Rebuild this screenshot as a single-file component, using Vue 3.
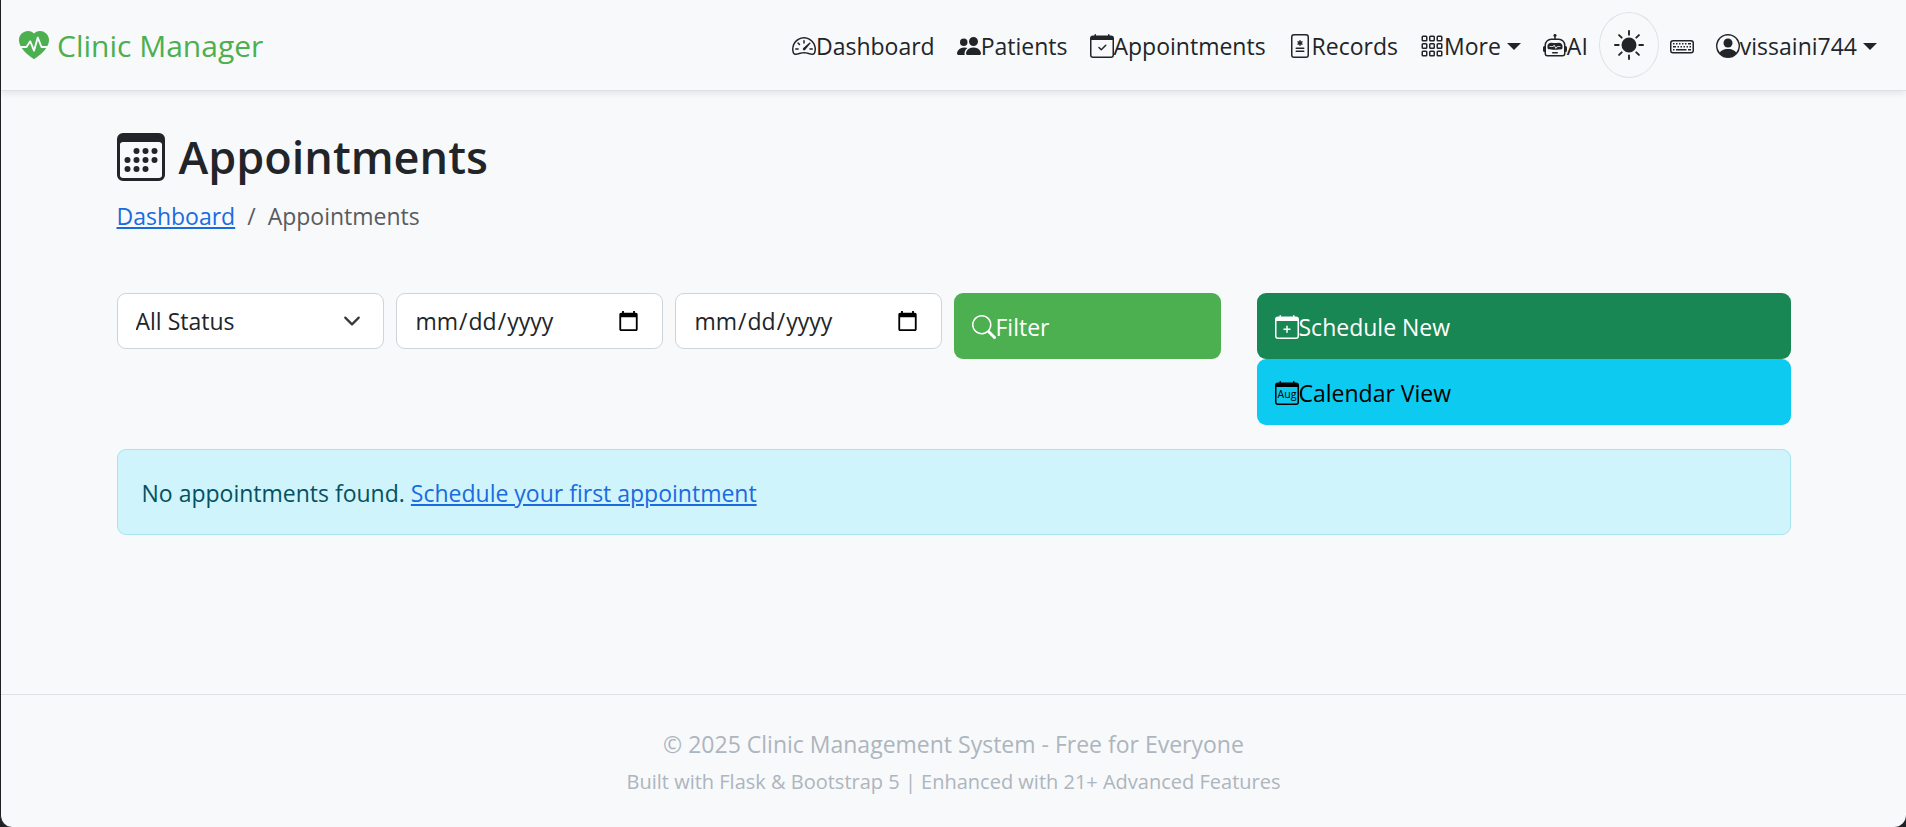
<template>
  <div class="page">
    <nav class="navbar">
      <a class="brand" href="#">
        <svg class="icon-lg" viewBox="0 0 16 16" aria-hidden="true">
          <path v-for="d in icons.heart" :key="d" :d="d" />
        </svg>
        Clinic Manager
      </a>
      <div class="nav-items">
        <template v-for="item in navItems" :key="item.label">
          <button v-if="item.menu" type="button" class="nav-link">
            <svg class="icon" viewBox="0 0 16 16" aria-hidden="true">
              <path v-for="d in icons[item.icon]" :key="d" :d="d" fill-rule="evenodd" />
            </svg>
            <span>{{ item.label }}</span>
            <span class="caret"></span>
          </button>
          <a v-else class="nav-link" href="#">
            <svg class="icon" viewBox="0 0 16 16" aria-hidden="true">
              <path v-for="d in icons[item.icon]" :key="d" :d="d" fill-rule="evenodd" />
            </svg>
            <span>{{ item.label }}</span>
          </a>
        </template>
        <button type="button" class="theme-toggle" aria-label="Toggle theme">
          <svg class="icon-lg" viewBox="0 0 16 16" aria-hidden="true">
            <path v-for="d in icons.sun" :key="d" :d="d" />
          </svg>
        </button>
        <button type="button" class="nav-link" aria-label="Keyboard shortcuts">
          <svg class="icon" viewBox="0 0 16 16" aria-hidden="true">
            <path v-for="d in icons.keyboard" :key="d" :d="d" fill-rule="evenodd" />
          </svg>
        </button>
        <button type="button" class="nav-link">
          <svg class="icon" viewBox="0 0 16 16" aria-hidden="true">
            <path v-for="d in icons.person" :key="d" :d="d" fill-rule="evenodd" />
          </svg>
          <span>vissaini744</span>
          <span class="caret"></span>
        </button>
      </div>
    </nav>

    <main class="container">
      <h1 class="title">
        <svg class="icon-xl" viewBox="0 0 16 16" aria-hidden="true">
          <path v-for="d in icons.calendar3" :key="d" :d="d" fill-rule="evenodd" />
        </svg>
        Appointments
      </h1>
      <nav class="breadcrumb" aria-label="breadcrumb">
        <a href="#">Dashboard</a>
        <span>/</span>
        <span>Appointments</span>
      </nav>

      <div class="toolbar">
        <form class="filters" @submit.prevent>
          <select v-model="status" class="field select" aria-label="Status">
            <option value="">All Status</option>
            <option value="scheduled">Scheduled</option>
            <option value="completed">Completed</option>
            <option value="cancelled">Cancelled</option>
          </select>
          <input v-model="dateFrom" class="field" type="date" aria-label="From date" />
          <input v-model="dateTo" class="field" type="date" aria-label="To date" />
          <button type="submit" class="btn btn-primary">
            <svg class="icon" viewBox="0 0 16 16" aria-hidden="true">
              <path v-for="d in icons.search" :key="d" :d="d" />
            </svg>
            <span>Filter</span>
          </button>
        </form>
        <div class="actions">
          <a class="btn btn-success" href="#">
            <svg class="icon" viewBox="0 0 16 16" aria-hidden="true">
              <path v-for="d in icons.calendarPlus" :key="d" :d="d" fill-rule="evenodd" />
            </svg>
            <span>Schedule New</span>
          </a>
          <a class="btn btn-info" href="#">
            <svg class="icon" viewBox="0 0 16 16" aria-hidden="true">
              <path :d="calendarFrame" fill-rule="evenodd" />
              <text class="month" x="8" y="11.4" text-anchor="middle">Aug</text>
            </svg>
            <span>Calendar View</span>
          </a>
        </div>
      </div>

      <div class="alert" role="alert">
        No appointments found. <a href="#">Schedule your first appointment</a>
      </div>
    </main>

    <footer class="footer">
      <p>&copy; 2025 Clinic Management System - Free for Everyone</p>
      <p class="small">Built with Flask &amp; Bootstrap 5 | Enhanced with 21+ Advanced Features</p>
    </footer>
  </div>
</template>

<script setup>
import { ref } from 'vue'

const status = ref('')
const dateFrom = ref('')
const dateTo = ref('')

const navItems = [
  { label: 'Dashboard', icon: 'speedometer' },
  { label: 'Patients', icon: 'people' },
  { label: 'Appointments', icon: 'calendarCheck' },
  { label: 'Records', icon: 'fileMedical' },
  { label: 'More', icon: 'grid', menu: true },
  { label: 'AI', icon: 'robot' }
]

const calendarFrame =
  'M3.5 0a.5.5 0 0 1 .5.5V1h8V.5a.5.5 0 0 1 1 0V1h1a2 2 0 0 1 2 2v11a2 2 0 0 1-2 2H2a2 2 0 0 1-2-2V3a2 2 0 0 1 2-2h1V.5a.5.5 0 0 1 .5-.5M1 4v10a1 1 0 0 0 1 1h12a1 1 0 0 0 1-1V4z'

const dot = (x, y) => `M${x - 1} ${y}a1 1 0 1 0 2 0a1 1 0 1 0-2 0z`
const cell = (x, y) =>
  `M${x + 1} ${y}h2a1 1 0 0 1 1 1v2a1 1 0 0 1-1 1h-2a1 1 0 0 1-1-1v-2a1 1 0 0 1 1-1zm0 1v2h2v-2z`
const key = (x, y, w = 1) => `M${x} ${y}h${w}v1h-${w}z`

const icons = {
  heart: [
    'M1.475 9C2.702 10.84 4.779 12.871 8 15c3.221-2.129 5.298-4.16 6.525-6H12a.5.5 0 0 1-.464-.314l-1.457-3.642-1.598 5.593a.5.5 0 0 1-.945.049L5.889 6.568l-1.473 2.21A.5.5 0 0 1 4 9z',
    'M.88 8C-2.427 1.68 4.41-2 7.823 1.143q.09.083.176.171a3 3 0 0 1 .176-.17C11.59-2 18.426 1.68 15.12 8h-2.783l-1.874-4.686a.5.5 0 0 0-.945.049L7.921 8.956 6.464 5.314a.5.5 0 0 0-.88-.091L3.732 8z'
  ],
  speedometer: [
    'M8 4a.5.5 0 0 1 .5.5V6a.5.5 0 0 1-1 0V4.5A.5.5 0 0 1 8 4M3.732 5.732a.5.5 0 0 1 .707 0l.915.914a.5.5 0 1 1-.708.708l-.914-.915a.5.5 0 0 1 0-.707M2 10a.5.5 0 0 1 .5-.5h1.586a.5.5 0 0 1 0 1H2.5A.5.5 0 0 1 2 10m9.5 0a.5.5 0 0 1 .5-.5h1.5a.5.5 0 0 1 0 1H12a.5.5 0 0 1-.5-.5m.754-4.246a.39.39 0 0 0-.527-.02L7.547 9.31a.91.91 0 1 0 1.302 1.258l3.434-4.297a.39.39 0 0 0-.029-.518z',
    'M0 10a8 8 0 1 1 15.547 2.661c-.442 1.253-1.845 1.602-2.932 1.25C11.309 13.488 9.475 13 8 13c-1.474 0-3.31.488-4.615.911-1.087.352-2.49.003-2.932-1.25A8 8 0 0 1 0 10m8-7a7 7 0 0 0-6.603 9.329c.203.575.923.876 1.68.63C4.397 12.533 6.358 12 8 12s3.604.532 4.923.96c.757.245 1.477-.056 1.68-.631A7 7 0 0 0 8 3'
  ],
  people: [
    'M7 14s-1 0-1-1 1-4 5-4 5 3 5 4-1 1-1 1zm4-6a3 3 0 1 0 0-6 3 3 0 0 0 0 6m-5.784 6A2.24 2.24 0 0 1 5 13c0-1.355.68-2.75 1.936-3.72A6.3 6.3 0 0 0 5 9c-4 0-5 3-5 4s1 1 1 1zM4.5 8a2.5 2.5 0 1 0 0-5 2.5 2.5 0 0 0 0 5'
  ],
  calendarCheck: [
    'M10.854 7.146a.5.5 0 0 1 0 .708l-3 3a.5.5 0 0 1-.708 0l-1.5-1.5a.5.5 0 1 1 .708-.708L7.5 9.793l2.646-2.647a.5.5 0 0 1 .708 0',
    calendarFrame
  ],
  calendarPlus: [
    'M8 7a.5.5 0 0 1 .5.5V9H10a.5.5 0 0 1 0 1H8.5v1.5a.5.5 0 0 1-1 0V10H6a.5.5 0 0 1 0-1h1.5V7.5A.5.5 0 0 1 8 7',
    calendarFrame
  ],
  fileMedical: [
    'M8.5 4.5a.5.5 0 0 0-1 0v.634l-.549-.317a.5.5 0 1 0-.5.866L7 6l-.549.317a.5.5 0 1 0 .5.866l.549-.317V7.5a.5.5 0 1 0 1 0v-.634l.549.317a.5.5 0 1 0 .5-.866L9 6l.549-.317a.5.5 0 1 0-.5-.866l-.549.317zM5.5 9a.5.5 0 0 0 0 1h5a.5.5 0 0 0 0-1zm0 2a.5.5 0 0 0 0 1h5a.5.5 0 0 0 0-1z',
    'M4 0a2 2 0 0 0-2 2v12a2 2 0 0 0 2 2h8a2 2 0 0 0 2-2V2a2 2 0 0 0-2-2zm0 1h8a1 1 0 0 1 1 1v12a1 1 0 0 1-1 1H4a1 1 0 0 1-1-1V2a1 1 0 0 1 1-1'
  ],
  grid: [1, 6, 11].flatMap((y) => [1, 6, 11].map((x) => cell(x, y))),
  robot: [
    'M6 12.5a.5.5 0 0 1 .5-.5h3a.5.5 0 0 1 0 1h-3a.5.5 0 0 1-.5-.5M3 8.062C3 6.76 4.235 5.765 5.53 5.886a26.6 26.6 0 0 0 4.94 0C11.765 5.765 13 6.76 13 8.062v1.157a.93.93 0 0 1-.765.935c-.845.147-2.34.346-4.235.346s-3.39-.2-4.235-.346A.93.93 0 0 1 3 9.219zm4.542-.827a.25.25 0 0 0-.217.068l-.92.9a25 25 0 0 1-1.871-.183.25.25 0 0 0-.068.495c.55.076 1.232.149 2.02.193a.25.25 0 0 0 .189-.071l.754-.736.847 1.71a.25.25 0 0 0 .404.062l.932-.97a25 25 0 0 0 1.922-.188.25.25 0 0 0-.068-.495c-.538.074-1.207.145-1.98.189a.25.25 0 0 0-.166.076l-.754.785-.842-1.7a.25.25 0 0 0-.182-.135',
    'M8.5 1.866a1 1 0 1 0-1 0V3h-2A4.5 4.5 0 0 0 1 7.5V8a1 1 0 0 0-1 1v2a1 1 0 0 0 1 1v1a2 2 0 0 0 2 2h10a2 2 0 0 0 2-2v-1a1 1 0 0 0 1-1V9a1 1 0 0 0-1-1v-.5A4.5 4.5 0 0 0 10.5 3h-2zM14 7.5V13a1 1 0 0 1-1 1H3a1 1 0 0 1-1-1V7.5A3.5 3.5 0 0 1 5.5 4h5A3.5 3.5 0 0 1 14 7.5'
  ],
  sun: [
    'M8 12a4 4 0 1 0 0-8 4 4 0 0 0 0 8M8 0a.5.5 0 0 1 .5.5v2a.5.5 0 0 1-1 0v-2A.5.5 0 0 1 8 0m0 13a.5.5 0 0 1 .5.5v2a.5.5 0 0 1-1 0v-2A.5.5 0 0 1 8 13m8-5a.5.5 0 0 1-.5.5h-2a.5.5 0 0 1 0-1h2a.5.5 0 0 1 .5.5M3 8a.5.5 0 0 1-.5.5h-2a.5.5 0 0 1 0-1h2A.5.5 0 0 1 3 8m10.657-5.657a.5.5 0 0 1 0 .707l-1.414 1.415a.5.5 0 1 1-.707-.708l1.414-1.414a.5.5 0 0 1 .707 0m-9.193 9.193a.5.5 0 0 1 0 .707L3.05 13.657a.5.5 0 0 1-.707-.707l1.414-1.414a.5.5 0 0 1 .707 0m9.193 2.121a.5.5 0 0 1-.707 0l-1.414-1.414a.5.5 0 0 1 .707-.707l1.414 1.414a.5.5 0 0 1 0 .707M4.464 4.465a.5.5 0 0 1-.707 0L2.343 3.05a.5.5 0 1 1 .707-.707l1.414 1.414a.5.5 0 0 1 0 .708'
  ],
  keyboard: [
    'M14 5a1 1 0 0 1 1 1v5a1 1 0 0 1-1 1H2a1 1 0 0 1-1-1V6a1 1 0 0 1 1-1zM2 4a2 2 0 0 0-2 2v5a2 2 0 0 0 2 2h12a2 2 0 0 0 2-2V6a2 2 0 0 0-2-2z',
    ...[2, 4, 6, 8, 10].map((x) => key(x, 6)),
    key(12, 6, 2),
    key(2, 8, 2),
    ...[5, 7, 9, 11, 13].map((x) => key(x, 8)),
    key(2, 10),
    key(4, 10, 7),
    key(12, 10, 2)
  ],
  person: [
    'M11 6a3 3 0 1 1-6 0 3 3 0 0 1 6 0',
    'M0 8a8 8 0 1 1 16 0A8 8 0 0 1 0 8m8-7a7 7 0 0 0-5.468 11.37C3.242 11.226 4.805 10 8 10s4.757 1.225 5.468 2.37A7 7 0 0 0 8 1'
  ],
  calendar3: [
    'M14 0H2a2 2 0 0 0-2 2v12a2 2 0 0 0 2 2h12a2 2 0 0 0 2-2V2a2 2 0 0 0-2-2M1 3.857C1 3.384 1.448 3 2 3h12c.552 0 1 .384 1 .857v10.286c0 .473-.448.857-1 .857H2c-.552 0-1-.384-1-.857z',
    ...[6.5, 9.5, 12.5].map((x) => dot(x, 6)),
    ...[3.5, 6.5, 9.5, 12.5].map((x) => dot(x, 9)),
    ...[3.5, 6.5, 9.5].map((x) => dot(x, 12))
  ],
  search: [
    'M11.742 10.344a6.5 6.5 0 1 0-1.397 1.398h-.001q.044.06.098.115l3.85 3.85a1 1 0 0 0 1.415-1.414l-3.85-3.85a1 1 0 0 0-.115-.1zM12 6.5a5.5 5.5 0 1 1-11 0 5.5 5.5 0 0 1 11 0'
  ]
}
</script>

<style>
body { margin:0; background:#202124 }
</style>

<style scoped>
* { box-sizing:border-box }
.page { min-height:100vh; display:flex; flex-direction:column; background:#f8f9fb; color:#212529; border-left:1px solid #202124; border-radius:0 0 12px 12px; font-family:"Segoe UI", "Open Sans", "Noto Sans", sans-serif; font-size:23px; line-height:36px }
button, input, select { font:inherit; color:inherit; margin:0 }
svg { fill:currentColor; flex:none }
.icon { width:24px; height:24px }
.icon-lg { width:30px; height:30px }
.icon-xl { width:48px; height:48px }

.navbar { display:flex; align-items:center; justify-content:space-between; padding:12px 18px; border-bottom:1px solid #dee2e6; box-shadow:0 3px 6px rgba(0,0,0,0.08) }
.brand { display:flex; align-items:center; gap:8px; padding-top:2px; color:#4caf50; font-size:30px; text-decoration:none }
.nav-items { display:flex; align-items:center }
.nav-link { display:flex; align-items:center; padding:13px 11px 11px; border:0; background:none; color:#212529; text-decoration:none; cursor:pointer }
.caret { margin-left:6px; border:7px solid transparent; border-top-color:currentColor; border-bottom:0 }
.theme-toggle { display:flex; align-items:center; justify-content:center; width:60px; height:66px; padding:0; border:1px solid #dee2e6; border-radius:50%; background:none; cursor:pointer }

.container { flex:1; width:100%; max-width:1710px; margin:0 auto; padding:37px 18px 36px }
.title { display:flex; align-items:center; gap:14px; margin:0 0 12px; font-size:45px; font-weight:600; line-height:58px }
.breadcrumb { display:flex; gap:12px; margin-bottom:59px; color:#595c5f }
a { color:#1a6be0 }
.toolbar { display:grid; grid-template-columns:repeat(12, 1fr); column-gap:36px; margin-bottom:24px }
.filters { grid-column:span 8; display:grid; grid-template-columns:repeat(4, 1fr); gap:12px; align-items:start }
.actions { grid-column:span 4; display:flex; flex-direction:column }
.field { width:100%; height:56px; padding:0 20px 0 18px; border:1px solid #ced4da; border-radius:9px; background-color:#fff }
.select { appearance:none; background-image:url("data:image/svg+xml,%3Csvg xmlns='http://www.w3.org/2000/svg' viewBox='0 0 16 16'%3E%3Cpath fill='none' stroke='%23343a40' stroke-linecap='round' stroke-linejoin='round' stroke-width='2' d='m2 5 6 6 6-6'/%3E%3C/svg%3E"); background-repeat:no-repeat; background-position:right 22px center; background-size:18px 18px }
.btn { display:flex; align-items:center; height:66px; padding:2px 18px 0; border:0; border-radius:9px; text-decoration:none; cursor:pointer }
.btn-primary { background:#4caf50; color:#fff }
.btn-success { background:#198754; color:#fff }
.btn-info { background:#0dcaf0; color:#000 }
.month { font-size:7px }
.alert { padding:25px 24px 23px; border:1px solid #a6e4ee; border-radius:9px; background:#cff4fc; color:#055160 }

.footer { display:flex; flex-direction:column; gap:2px; padding:31px 18px 27px; border-top:1px solid #dee2e6; color:#adb5bd; text-align:center }
.footer p { margin:0 }
.footer .small { font-size:20px }
</style>
